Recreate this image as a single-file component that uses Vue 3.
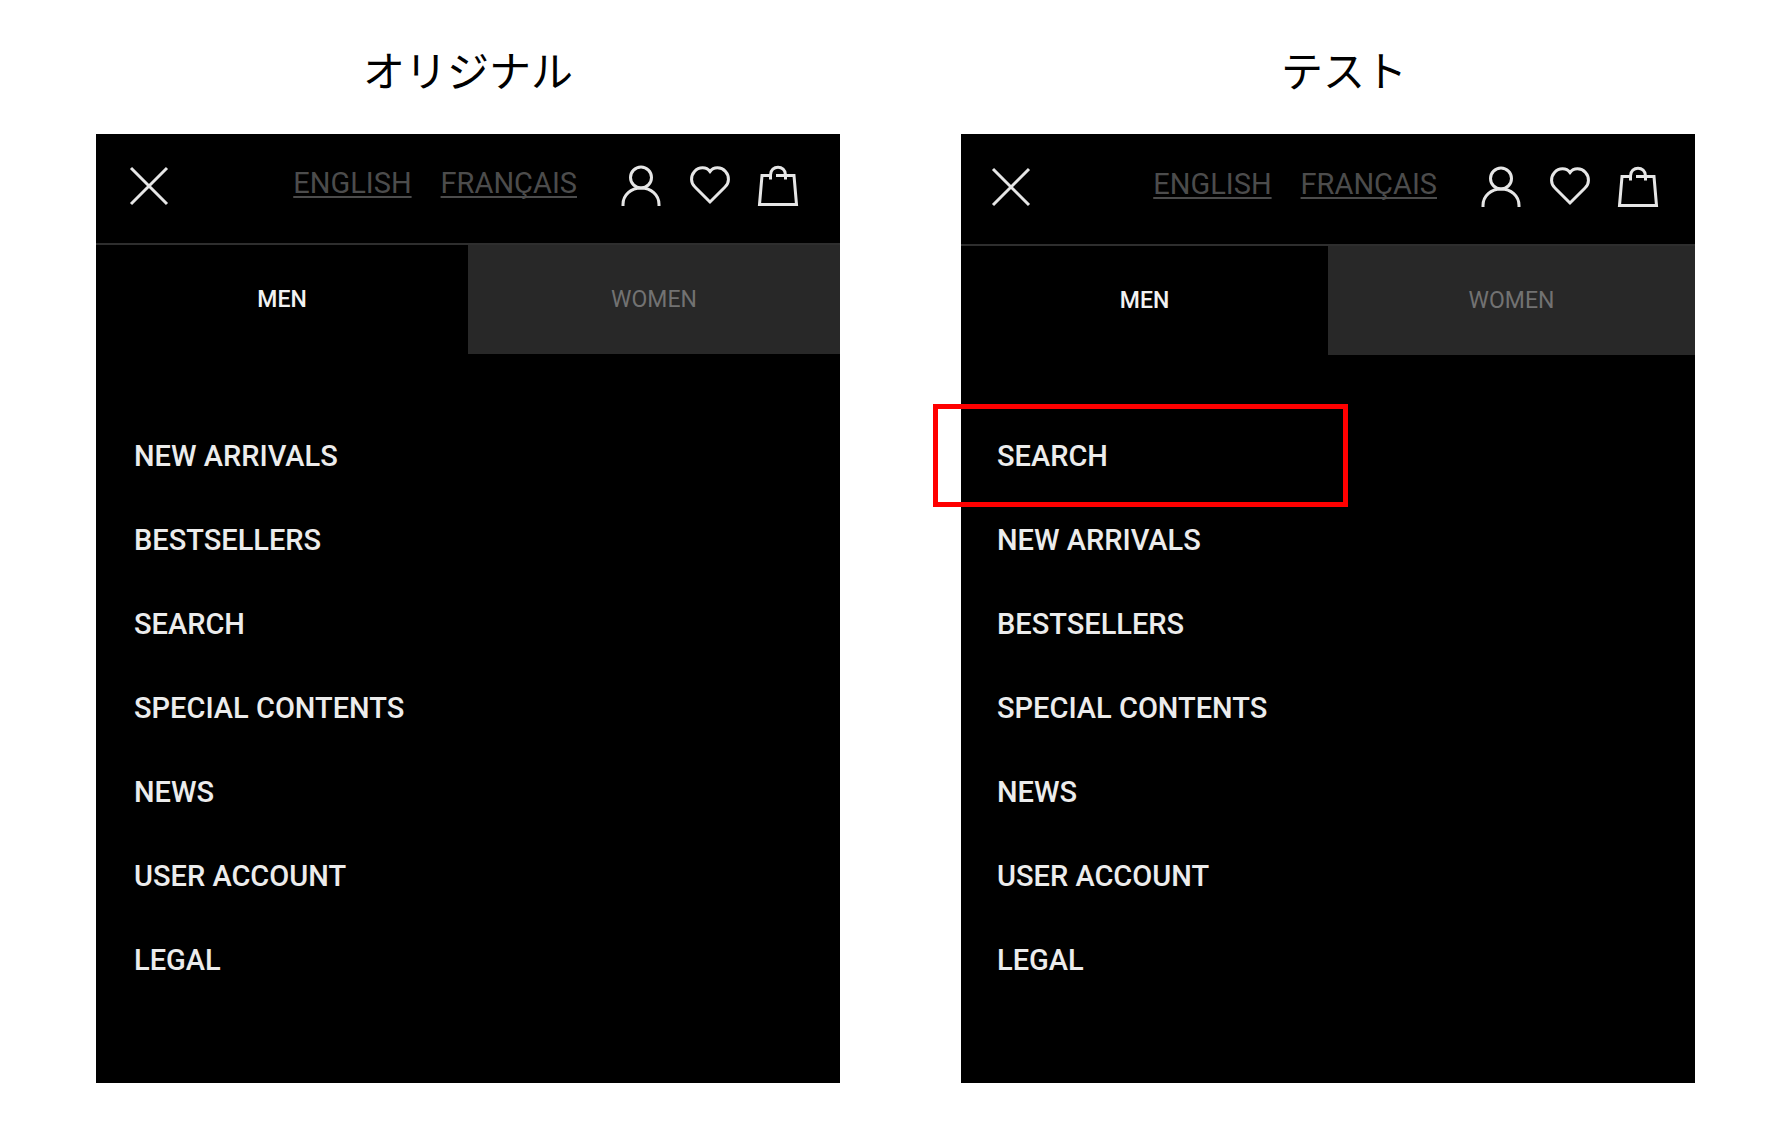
<script setup>
const panels = [
  {
    id: 'original',
    title: 'オリジナル',
    items: ['NEW ARRIVALS', 'BESTSELLERS', 'SEARCH', 'SPECIAL CONTENTS', 'NEWS', 'USER ACCOUNT', 'LEGAL'],
    highlight: null,
  },
  {
    id: 'test',
    title: 'テスト',
    items: ['SEARCH', 'NEW ARRIVALS', 'BESTSELLERS', 'SPECIAL CONTENTS', 'NEWS', 'USER ACCOUNT', 'LEGAL'],
    highlight: 'SEARCH',
  },
]
</script>

<template>
  <main class="comparison">
    <section v-for="panel in panels" :key="panel.id" class="variant" :class="panel.id">
      <h2 class="title">{{ panel.title }}</h2>
      <div class="menu">
        <header class="bar">
          <button class="icon" type="button" aria-label="Close">
            <svg width="40" height="40" viewBox="0 0 40 40"><path d="M2 2L38 38M38 2L2 38" /></svg>
          </button>
          <div class="languages">
            <a href="#en">ENGLISH</a>
            <a href="#fr">FRANÇAIS</a>
          </div>
          <div class="actions">
            <button class="icon" type="button" aria-label="Account">
              <svg width="40" height="40" viewBox="0 0 40 40">
                <circle cx="19" cy="11.5" r="10.5" />
                <path d="M1 40V38.500C1 29 9 22 19 22S37 29 37 38.500V40" />
              </svg>
            </button>
            <button class="icon" type="button" aria-label="Favourites">
              <svg width="40" height="40" viewBox="0 0 40 40">
                <path d="M20 36L5 21C.5 17 .5 10 4.500 5.500C9 .5 16.500 .8 20 5.500C23.500 .8 31 .5 35.500 5.500C39.500 10 39.500 17 35 21Z" />
              </svg>
            </button>
            <button class="icon" type="button" aria-label="Shopping bag">
              <svg width="40" height="40" viewBox="0 0 40 40">
                <path d="M13 9.500H4L1.500 38.500H38.500L36 9.500H18" />
                <path d="M12.500 13.500V9C12.500 -1.300 27.500 -1.300 27.500 9V13.500" />
              </svg>
            </button>
          </div>
        </header>
        <div class="tabs" role="tablist">
          <button class="tab active" type="button" role="tab" aria-selected="true">MEN</button>
          <button class="tab" type="button" role="tab" aria-selected="false">WOMEN</button>
        </div>
        <ul class="links">
          <li v-for="item in panel.items" :key="item" :class="{ highlighted: item === panel.highlight }">
            <a href="#menu">{{ item }}</a>
          </li>
        </ul>
      </div>
    </section>
  </main>
</template>

<style>
body {
  margin: 0;
  background: #fff;
}
</style>

<style scoped>
.comparison {
  display: grid;
  grid-template-columns: 744fr 734fr;
  column-gap: 121px;
  padding: 37px 93px 45px 96px;
  font-family: Roboto, "Liberation Sans", sans-serif;
}

.original {
  --bar-height: 109px;
  --bar-left: 33px;
  --bar-right: 42px;
  --inset: 38px;
}

.test {
  --bar-height: 110px;
  --bar-left: 30px;
  --bar-right: 37px;
  --inset: 36px;
}

.title {
  margin: 0;
  height: 97px;
  color: #000;
  font: 400 42px/64px "Noto Sans CJK JP", sans-serif;
  text-align: center;
}

.test .title {
  padding-left: 32px;
}

.menu {
  background: #000;
}

.bar {
  box-sizing: border-box;
  display: flex;
  align-items: center;
  height: var(--bar-height);
  padding: 0 var(--bar-right) 5px var(--bar-left);
}

.icon {
  display: block;
  padding: 0;
  border: 0;
  background: none;
}

.icon svg {
  display: block;
  overflow: visible;
  fill: none;
  stroke: #e6e6e6;
  stroke-width: 3;
}

.languages {
  display: flex;
  gap: 29px;
  margin-left: auto;
  padding-bottom: 6px;
}

.languages a {
  color: #4c4c4c;
  font-size: 29px;
  line-height: 40px;
  text-decoration: underline;
  text-decoration-thickness: 2px;
  text-underline-offset: 3px;
  text-decoration-skip-ink: none;
}

.actions {
  display: flex;
  gap: 28px;
  margin-left: 45px;
}

.tabs {
  display: grid;
  grid-template-columns: 1fr 1fr;
}

.tab {
  height: 111px;
  padding: 0;
  border: 0;
  border-top: 2px solid #2e2e2e;
  background: #282828;
  color: #727272;
  font: 400 23px/32px Roboto, "Liberation Sans", sans-serif;
}

.tab.active {
  background: #000;
  color: #f2f2f2;
  font-weight: 500;
}

.links {
  margin: 0;
  padding: 60px 0 81px;
  list-style: none;
}

.test .links {
  padding: 59px 0 81px;
}

.links li {
  position: relative;
  padding-left: var(--inset);
  line-height: 84px;
}

.links a {
  display: block;
  color: #ececec;
  font-size: 29px;
  font-weight: 500;
  text-decoration: none;
}

.highlighted::before {
  content: "";
  position: absolute;
  top: -10px;
  left: -28px;
  box-sizing: border-box;
  width: 415px;
  height: 103px;
  border: 5px solid #f00;
  pointer-events: none;
}
</style>
